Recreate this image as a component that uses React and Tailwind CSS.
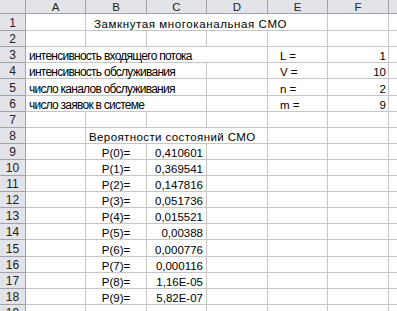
import React from 'react';

const SPAN = { 1: 'col-span-1', 2: 'col-span-2', 3: 'col-span-3', 4: 'col-span-4' };
const HEIGHT = { 16: 'h-[16px]', 17: 'h-[17px]' };
const GRID = 'grid grid-cols-[26px_60px_61px_60px_61px_60px_61px_60px]';

const probs = ['0,410601', '0,369541', '0,147816', '0,051736', '0,015521', '0,00388', '0,000776', '0,000116', '1,16E-05', '5,82E-07'];

const LABEL = 'pl-[3px] text-[12px] tracking-[-0.75px]';

// text cells that overflow into neighbours are drawn as one spanned cell, like Excel hides the grid under them
const rows = [
  { n: 1, h: 17, cells: [{}, { span: 4, text: 'Замкнутая многоканальная СМО', cls: 'pl-[8px] tracking-[0.6px]' }, {}, {}] },
  { n: 2, h: 16, cells: [{}, {}, {}, {}, {}, {}, {}] },
  { n: 3, h: 16, cells: [{ span: 4, text: 'интенсивность входящего потока', cls: LABEL }, { text: 'L =', cls: 'pl-[12px]' }, { text: '1', cls: 'justify-end pr-[2px]' }, {}] },
  { n: 4, h: 16, cells: [{ span: 3, text: 'интенсивность обслуживания', cls: LABEL }, {}, { text: 'V =', cls: 'pl-[12px]' }, { text: '10', cls: 'justify-end pr-[2px]' }, {}] },
  { n: 5, h: 17, cells: [{ span: 3, text: 'число каналов обслуживания', cls: LABEL }, {}, { text: 'n =', cls: 'pl-[12px]' }, { text: '2', cls: 'justify-end pr-[2px]' }, {}] },
  { n: 6, h: 16, cells: [{ span: 3, text: 'число заявок в системе', cls: LABEL }, {}, { text: 'm =', cls: 'pl-[12px]' }, { text: '9', cls: 'justify-end pr-[2px]' }, {}] },
  { n: 7, h: 16, cells: [{}, {}, {}, {}, {}, {}, {}] },
  { n: 8, h: 16, cells: [{}, { span: 3, text: 'Вероятности состояний СМО', cls: 'pl-[3px] tracking-[0.4px]' }, {}, {}, {}] },
  ...probs.map((p, i) => ({
    n: 9 + i,
    h: i === 6 ? 17 : 16,
    cells: [{}, { text: `P(${i})=`, cls: 'justify-center' }, { text: p, cls: 'justify-end pr-[3px]' }, {}, {}, {}, {}],
  })),
  { n: 19, h: 16, cells: [{}, {}, {}, {}, {}, {}, {}] },
];

function Cell({ span = 1, text, cls = '' }) {
  return (
    <div className={`${SPAN[span]} flex items-end whitespace-nowrap border-r border-b border-[#c6c6c6] leading-[12px] ${cls}`}>
      {text}
    </div>
  );
}

export default function App() {
  return (
    <div className="w-[397px] h-[311px] overflow-hidden bg-white text-black text-[11.5px] font-['Liberation_Sans',Arial,sans-serif]">
      <div className={`${GRID} h-[14px] bg-[#e3e3ea] text-[#222]`}>
        <div className="border-r border-b border-[#a3a3ad]" />
        {['A', 'B', 'C', 'D', 'E', 'F', 'G'].map((c) => (
          <div key={c} className="flex items-center justify-center leading-[12px] border-r border-b border-[#a3a3ad]">
            {c === 'G' ? '' : c}
          </div>
        ))}
      </div>
      {rows.map((r) => (
        <div key={r.n} className={`${GRID} ${HEIGHT[r.h]}`}>
          <div className="flex items-end justify-center leading-[13px] text-[12px] bg-[#e3e3ea] border-r border-b border-[#a3a3ad] text-[#222]">
            {r.n}
          </div>
          {r.cells.map((c, i) => (
            <Cell key={i} {...c} />
          ))}
        </div>
      ))}
    </div>
  );
}
